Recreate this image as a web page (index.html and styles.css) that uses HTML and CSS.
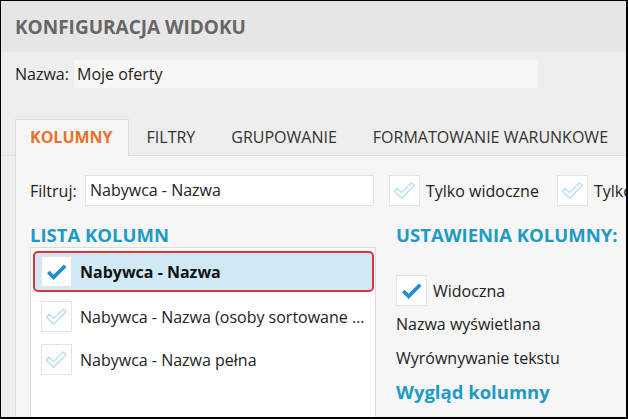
FILE: index.html
```html
<!DOCTYPE html>
<html lang="pl">
<head>
<meta charset="utf-8">
<link rel="stylesheet" href="styles.css">
</head>
<body>
<div class="window">
  <div class="header"><h1 class="title">KONFIGURACJA WIDOKU</h1></div>
  <div class="name-row">
    <span class="label name-label">Nazwa:</span>
    <div class="name-input">Moje oferty</div>
  </div>
  <div class="tabs">
    <div class="tab active">KOLUMNY</div>
    <div class="tab">FILTRY</div>
    <div class="tab">GRUPOWANIE</div>
    <div class="tab">FORMATOWANIE WARUNKOWE</div>
  </div>
  <div class="panel">
    <div class="filter-row">
      <span class="label filter-label">Filtruj:</span>
      <div class="filter-input">Nabywca - Nazwa</div>
      <div class="cb-wrap">
        <span class="cb"><svg viewBox="0 0 30 30"><path class="chk-light" d="M4.5 15.5 L7.4 12.6 L12 17.2 L22.1 7.1 L25 10 L12 23 Z"/></svg></span>
        <span class="cb-label">Tylko widoczne</span>
      </div>
      <div class="cb-wrap">
        <span class="cb"><svg viewBox="0 0 30 30"><path class="chk-light" d="M4.5 15.5 L7.4 12.6 L12 17.2 L22.1 7.1 L25 10 L12 23 Z"/></svg></span>
        <span class="cb-label">Tylko wybrane</span>
      </div>
    </div>
    <div class="columns">
      <div class="left">
        <h2 class="section">LISTA KOLUMN</h2>
        <div class="list">
          <div class="item selected">
            <span class="cb"><svg viewBox="0 0 30 30"><path class="chk-dark" d="M6.5 15.5 L12 21 L24 9"/></svg></span>
            <span class="item-text bold">Nabywca - Nazwa</span>
          </div>
          <div class="item">
            <span class="cb"><svg viewBox="0 0 30 30"><path class="chk-light" d="M4.5 15.5 L7.4 12.6 L12 17.2 L22.1 7.1 L25 10 L12 23 Z"/></svg></span>
            <span class="item-text">Nabywca - Nazwa (osoby sortowane alfabetycznie)</span>
          </div>
          <div class="item">
            <span class="cb"><svg viewBox="0 0 30 30"><path class="chk-light" d="M4.5 15.5 L7.4 12.6 L12 17.2 L22.1 7.1 L25 10 L12 23 Z"/></svg></span>
            <span class="item-text">Nabywca - Nazwa pełna</span>
          </div>
        </div>
      </div>
      <div class="right">
        <h2 class="section">USTAWIENIA KOLUMNY:</h2>
        <div class="cb-wrap visible-row">
          <span class="cb"><svg viewBox="0 0 30 30"><path class="chk-dark" d="M6.5 15.5 L12 21 L24 9"/></svg></span>
          <span class="cb-label">Widoczna</span>
        </div>
        <div class="setting first">Nazwa wyświetlana</div>
        <div class="setting second">Wyrównywanie tekstu</div>
        <h3 class="subsection">Wygląd kolumny</h3>
      </div>
    </div>
  </div>
</div>
</body>
</html>
```
FILE: styles.css
```css
* { box-sizing: border-box; }
html, body { margin: 0; padding: 0; background: #000; }
body { font-family: "Open Sans", "Noto Sans", sans-serif; color: #222; }

.window {
  width: 628px;
  height: 419px;
  border-top: 1px solid #000;
  border-left: 1px solid #000;
  border-right: 2px solid #000;
  border-bottom: 2px solid #000;
  background: #eeeeee;
  overflow: hidden;
  display: flex;
  flex-direction: column;
}

.header {
  height: 51px;
  flex: none;
  background: #e6e6e6;
  display: flex;
  align-items: center;
  padding-left: 14px;
}
.title {
  margin: 0;
  font-size: 19px;
  font-weight: 700;
  color: #666;
}

.name-row {
  flex: none;
  display: flex;
  align-items: center;
  margin-top: 8px;
  padding-left: 14px;
  height: 28px;
}
.label { font-size: 16px; color: #222; white-space: nowrap; }
.name-label { width: 59px; flex: none; }
.name-input {
  width: 464px;
  height: 28px;
  background: #f6f6f6;
  font-size: 16px;
  line-height: 28px;
  padding-left: 3px;
}

.tabs {
  flex: none;
  display: flex;
  margin-top: 31px;
  padding-left: 14px;
  border-bottom: 1px solid #dcdcdc;
  height: 37px;
}
.tab {
  padding: 0 17px;
  font-size: 16px;
  color: #333;
  line-height: 35px;
  border: 1px solid transparent;
  border-bottom: none;
  white-space: nowrap;
}
.tab.active {
  padding: 0 15px 0 14px;
  background: #f6f6f6;
  color: #e8722c;
  font-weight: 700;
  border-color: #dcdcdc;
  height: 37px;
  margin-bottom: -1px;
}

.panel {
  flex: 1;
  margin-left: 14px;
  background: #f6f6f6;
  border-left: 1px solid #dcdcdc;
  display: flex;
  flex-direction: column;
  min-height: 0;
}

.filter-row {
  display: flex;
  align-items: center;
  padding: 19px 0 0 14px;
  height: 50px;
  flex: none;
}
.filter-label { width: 55px; flex: none; }
.filter-input {
  width: 289px;
  height: 31px;
  background: #fff;
  border: 1px solid #e2e2e2;
  font-size: 16px;
  line-height: 29px;
  padding-left: 4px;
  flex: none;
}
.filter-row .cb-wrap { margin-left: 15px; flex: none; }
.filter-row .cb-wrap + .cb-wrap { margin-left: 18px; }

.cb-wrap { display: flex; align-items: center; }
.cb {
  width: 31px;
  height: 31px;
  background: #fff;
  border: 1px solid #e4e4e4;
  display: inline-flex;
  flex: none;
}
.cb svg { width: 29px; height: 29px; }
.chk-light { fill: none; stroke: #b3ddf1; stroke-width: 1.4; stroke-linejoin: round; }
.chk-dark { fill: none; stroke: #1b8fd6; stroke-width: 3.8; stroke-linejoin: miter; }
.cb-label { margin-left: 6px; font-size: 16px; white-space: nowrap; }

.columns {
  flex: 1;
  display: flex;
  min-height: 0;
  margin-top: 17px;
}
.left {
  width: 360px;
  flex: none;
  padding-left: 14px;
  display: flex;
  flex-direction: column;
}
.section {
  margin: 0;
  font-size: 18.5px;
  font-weight: 700;
  color: #1e9bc5;
  line-height: 24px;
  white-space: nowrap;
}
.list {
  flex: 1;
  background: #fff;
  border: 1px solid #dcdcdc;
  border-bottom: none;
  padding: 3px 1px 0 2px;
}
.item {
  display: flex;
  align-items: center;
  height: 43px;
  padding-left: 6px;
  padding-right: 6px;
  border: 2px solid transparent;
  border-radius: 5px;
}
.item.selected {
  background: #d0eaf5;
  border-color: #e2313a;
  height: 41px;
  margin-bottom: 3px;
}
.item-text {
  margin-left: 8px;
  flex: 1;
  min-width: 0;
  font-size: 16px;
  white-space: nowrap;
  overflow: hidden;
  text-overflow: ellipsis;
  color: #222;
}
.item-text.bold { font-weight: 700; color: #111; }

.right {
  flex: 1;
  padding-left: 20px;
  min-width: 0;
}
.visible-row { margin-top: 28px; }
.setting {
  font-size: 16px;
  line-height: 22px;
}
.setting.first { margin-top: 7px; }
.setting.second { margin-top: 12px; }
.subsection {
  margin: 10px 0 0;
  font-size: 18.5px;
  font-weight: 700;
  color: #1e9bc5;
  line-height: 26px;
}
```
